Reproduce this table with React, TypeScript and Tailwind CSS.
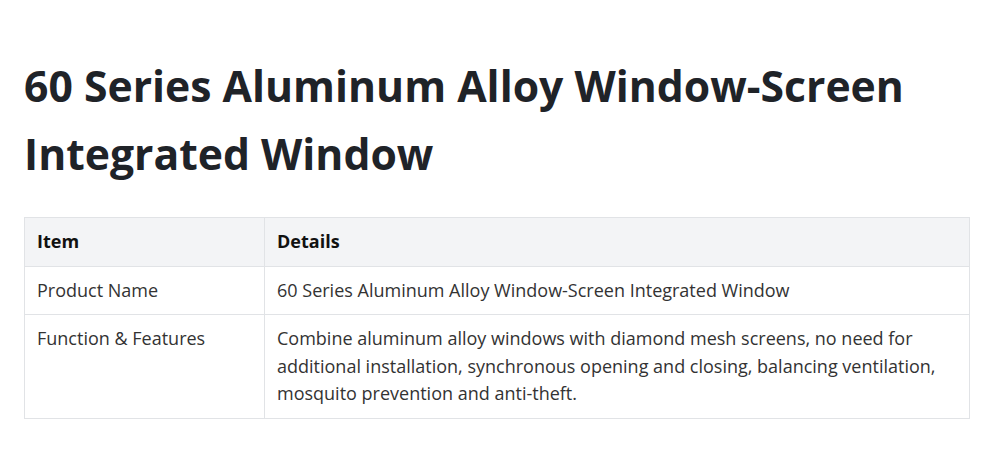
export default function App() {
  const rows = [
    { item: 'Product Name', details: '60 Series Aluminum Alloy Window-Screen Integrated Window' },
    {
      item: 'Function & Features',
      details:
        'Combine aluminum alloy windows with diamond mesh screens, no need for additional installation, synchronous opening and closing, balancing ventilation, mosquito prevention and anti-theft.',
    },
  ]

  return (
    <div className="min-h-[472px] w-full bg-white px-6 pt-[52px] font-['Open_Sans',sans-serif] text-[#1f2328]">
      <h1 className="m-0 text-[42.7px] font-bold leading-[68px] text-[#1f2328]">
        60 Series Aluminum Alloy Window-Screen Integrated Window
      </h1>
      <table className="mt-[29px] w-[946px] border-collapse text-[18px] leading-[27.6px]">
        <thead>
          <tr className="bg-[#f3f4f6]">
            <th className="w-[240px] border border-[#e1e3e6] px-3 py-[10px] text-left font-bold text-[#111]">Item</th>
            <th className="border border-[#e1e3e6] px-3 py-[10px] text-left font-bold text-[#111]">Details</th>
          </tr>
        </thead>
        <tbody>
          {rows.map((row) => (
            <tr key={row.item}>
              <td className="border border-[#e1e3e6] px-3 py-[10px] align-top text-[#333]">{row.item}</td>
              <td className="border border-[#e1e3e6] px-3 py-[10px] align-top text-[#333]">{row.details}</td>
            </tr>
          ))}
        </tbody>
      </table>
    </div>
  )
}
